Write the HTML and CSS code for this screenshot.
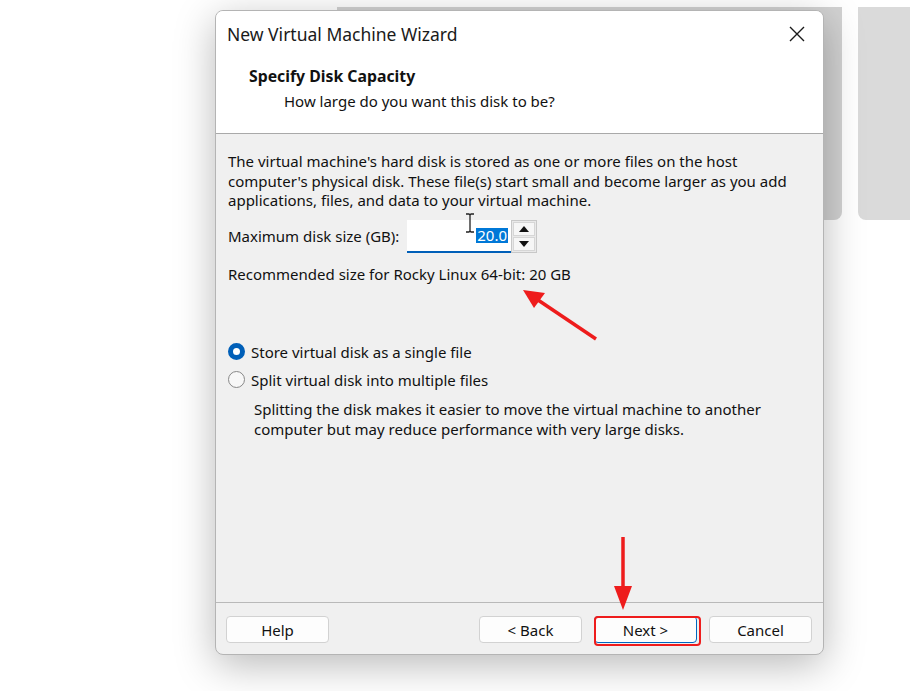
FILE: index.html
```html
<!DOCTYPE html>
<html lang="en">
<head>
    <meta charset="UTF-8">
    <title>New Virtual Machine Wizard</title>
    <link rel="stylesheet" href="styles.css">
</head>
<body>
    <div class="desktop">
        <div class="bg-window bg-window-main"></div>
        <div class="bg-window bg-window-side"></div>

        <div class="dialog">
            <div class="title-bar">
                <span class="title-text">New Virtual Machine Wizard</span>
                <svg class="close-icon" width="16" height="16" viewBox="0 0 16 16">
                    <path d="M1 1 L15 15 M15 1 L1 15" stroke="#1a1a1a" stroke-width="1.4" fill="none"/>
                </svg>
            </div>
            <div class="header">
                <h2 class="header-title">Specify Disk Capacity</h2>
                <p class="header-sub">How large do you want this disk to be?</p>
            </div>

            <div class="content">
                <p class="intro">The virtual machine's hard disk is stored as one or more files on the host computer's physical disk. These file(s) start small and become larger as you add applications, files, and data to your virtual machine.</p>

                <div class="size-row">
                    <label class="size-label">Maximum disk size (GB):</label>
                    <div class="spin">
                        <div class="spin-input">
                            <span class="selected-value">20.0</span>
                        </div>
                        <div class="spin-buttons">
                            <div class="spin-btn">
                                <svg width="10" height="6" viewBox="0 0 10 6"><path d="M0 6 L5 0 L10 6 Z" fill="#111"/></svg>
                            </div>
                            <div class="spin-btn">
                                <svg width="10" height="6" viewBox="0 0 10 6"><path d="M0 0 L5 6 L10 0 Z" fill="#111"/></svg>
                            </div>
                        </div>
                    </div>
                </div>

                <p class="recommended">Recommended size for Rocky Linux 64-bit: 20 GB</p>

                <div class="options">
                    <div class="radio-row">
                        <span class="radio checked"></span>
                        <span>Store virtual disk as a single file</span>
                    </div>
                    <div class="radio-row">
                        <span class="radio"></span>
                        <span>Split virtual disk into multiple files</span>
                    </div>
                    <p class="option-note">Splitting the disk makes it easier to move the virtual machine to another computer but may reduce performance with very large disks.</p>
                </div>
            </div>

            <div class="footer">
                <button class="btn">Help</button>
                <div class="footer-right">
                    <button class="btn">&lt; Back</button>
                    <button class="btn btn-default">Next &gt;</button>
                    <button class="btn">Cancel</button>
                </div>
            </div>
        </div>

        <!-- annotations drawn over the screenshot -->
        <svg class="ibeam" width="10" height="20" viewBox="0 0 10 20">
            <path d="M1 1 H4 L5 2 L6 1 H9 M5 2 V18 M1 19 H4 L5 18 L6 19 H9" stroke="#222" stroke-width="1.3" fill="none"/>
        </svg>
        <div class="highlight-box"></div>
        <svg class="annotations" width="910" height="691" viewBox="0 0 910 691">
            <line x1="596" y1="339" x2="538" y2="300" stroke="#ee1c1c" stroke-width="3.5"/>
            <path d="M523 290 L545 293 L534 308 Z" fill="#ee1c1c"/>
            <line x1="623" y1="537" x2="623" y2="592" stroke="#ee1c1c" stroke-width="3.5"/>
            <path d="M614 586 L632 586 L623 610 Z" fill="#ee1c1c"/>
        </svg>
    </div>
</body>
</html>
```

FILE: styles.css
```css
body {
    margin: 0;
    background-color: #fff;
    font-family: "Noto Sans", "Open Sans", sans-serif;
    color: #111;
}

.desktop {
    position: relative;
    width: 910px;
    height: 691px;
    overflow: hidden;
    padding: 10px 0 0 215px;
    box-sizing: border-box;
}

.bg-window {
    position: absolute;
    top: 7px;
    height: 213px;
    background-color: #d2d2d2;
    border-radius: 0 0 8px 8px;
}

.bg-window-main {
    left: 337px;
    width: 505px;
}

.bg-window-side {
    left: 858px;
    width: 70px;
    background-color: #dadada;
}

.dialog {
    position: relative;
    width: 609px;
    height: 645px;
    box-sizing: border-box;
    border: 1px solid #b4b4b4;
    border-radius: 8px;
    background-color: #f0f0f0;
    box-shadow: 0 10px 40px rgba(0, 0, 0, 0.28);
    display: flex;
    flex-direction: column;
    overflow: hidden;
}

.title-bar {
    height: 45px;
    background-color: #fff;
    display: flex;
    align-items: center;
    justify-content: space-between;
    padding: 0 18px 0 11px;
}

.title-text {
    font-size: 17.5px;
    color: #1a1a1a;
}

.header {
    background-color: #fff;
    padding: 10px 0 22px 33px;
    border-bottom: 1px solid #a9a9a9;
}

.header-title {
    margin: 0;
    font-size: 15.8px;
    font-weight: bold;
    line-height: 20px;
}

.header-sub {
    margin: 5px 0 0 35px;
    font-size: 15px;
    line-height: 20px;
}

.content {
    flex-grow: 1;
    padding: 18px 12px 0 12px;
    font-size: 15px;
}

.intro {
    margin: 0;
    line-height: 19.5px;
    width: 560px;
}

.size-row {
    display: flex;
    align-items: center;
    margin-top: 9px;
    height: 33px;
}

.size-label {
    width: 179px;
}

.spin {
    display: flex;
    height: 33px;
}

.spin-input {
    width: 104px;
    height: 33px;
    box-sizing: border-box;
    background-color: #fff;
    border-bottom: 2px solid #005fb8;
    display: flex;
    align-items: center;
    justify-content: flex-end;
    padding-right: 3px;
}

.selected-value {
    background-color: #0078d7;
    color: #fff;
    line-height: 15px;
    padding: 0 1px;
}

.spin-buttons {
    display: flex;
    flex-direction: column;
    width: 26px;
    border: 1px solid #c8c8c8;
    box-sizing: border-box;
    background-color: #e9e9e9;
    padding: 1px;
    gap: 1px;
}

.spin-btn {
    flex-grow: 1;
    display: flex;
    align-items: center;
    justify-content: center;
    background-color: #f6f6f6;
    border: 1px solid #d6d6d6;
}

.recommended {
    margin: 11px 0 0 0;
    line-height: 20px;
}

.options {
    margin-top: 54px;
}

.radio-row {
    display: flex;
    align-items: center;
    gap: 6px;
    height: 28px;
    line-height: 20px;
}

.radio {
    width: 17px;
    height: 17px;
    box-sizing: border-box;
    border-radius: 50%;
    border: 1px solid #888;
    background-color: #f7f7f7;
}

.radio.checked {
    border: 5px solid #005fb8;
    background-color: #fff;
}

.option-note {
    margin: 5px 0 0 26px;
    line-height: 20px;
    width: 560px;
}

.footer {
    border-top: 1px solid #b9b9b9;
    padding: 13px 11px 11px 10px;
    display: flex;
    justify-content: space-between;
}

.footer-right {
    display: flex;
    gap: 12px;
}

.btn {
    width: 103px;
    height: 27px;
    font-family: inherit;
    font-size: 15px;
    color: #111;
    background-color: #fdfdfd;
    border: 1px solid #d2d2d2;
    border-radius: 4px;
    padding: 0;
}

.btn-default {
    border: 1px solid #0067c0;
}

.ibeam {
    position: absolute;
    left: 465px;
    top: 213px;
}

.highlight-box {
    position: absolute;
    left: 594px;
    top: 616px;
    width: 107px;
    height: 30px;
    box-sizing: border-box;
    border: 2px solid #ee1c1c;
    border-radius: 4px;
}

.annotations {
    position: absolute;
    left: 0;
    top: 0;
    pointer-events: none;
}
```
